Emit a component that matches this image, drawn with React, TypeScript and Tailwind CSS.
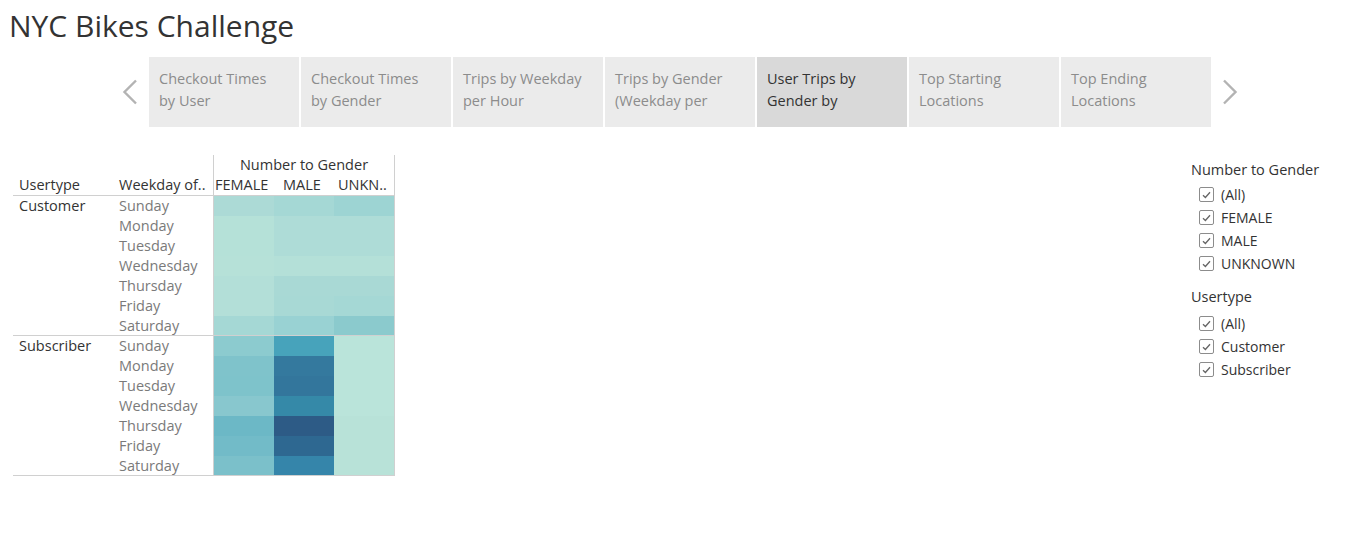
import React from "react";

const tabs = [
  { lines: ["Checkout Times", "by User"] },
  { lines: ["Checkout Times", "by Gender"] },
  { lines: ["Trips by Weekday", "per Hour"] },
  { lines: ["Trips by Gender", "(Weekday per"] },
  { lines: ["User Trips by", "Gender by"], active: true },
  { lines: ["Top Starting", "Locations"] },
  { lines: ["Top Ending", "Locations"] },
];

const days = ["Sunday", "Monday", "Tuesday", "Wednesday", "Thursday", "Friday", "Saturday"];

const groups = [
  {
    name: "Customer",
    cells: [
      ["#acdad6", "#a5d8d5", "#9dd4d3"],
      ["#b5e1d8", "#aedcd7", "#aedcd7"],
      ["#b5e1d8", "#aedcd7", "#aedcd7"],
      ["#b6e1d8", "#b4e0d8", "#b4e0d8"],
      ["#b3dfd8", "#a9d9d5", "#a9d9d5"],
      ["#b3dfd8", "#a8d9d5", "#a5d8d5"],
      ["#a5d8d5", "#99d2d3", "#8bcacd"],
    ],
  },
  {
    name: "Subscriber",
    cells: [
      ["#8ccbcf", "#47a3bb", "#bae4da"],
      ["#7fc3cb", "#34799e", "#bae4da"],
      ["#7ec3cb", "#33769c", "#bae4da"],
      ["#88c7ce", "#3589a8", "#bae4da"],
      ["#6cb8c6", "#2d5b86", "#b8e2d8"],
      ["#72bbc8", "#2e6891", "#b8e2d8"],
      ["#7bc0ca", "#3585aa", "#b8e2d8"],
    ],
  },
];

function Chevron({ dir }: { dir: "left" | "right" }) {
  return (
    <svg width="16" height="26" viewBox="0 0 16 26" fill="none">
      <path
        d={dir === "left" ? "M14 1.5 L2.5 13 L14 24.5" : "M2 1.5 L13.5 13 L2 24.5"}
        stroke="#b3b3b3"
        strokeWidth="2.4"
      />
    </svg>
  );
}

function CheckItem({ label }: { label: string }) {
  return (
    <div className="flex h-[23px] items-center pl-[8px]">
      <span className="flex h-[15px] w-[15px] items-center justify-center rounded-[2px] border border-[#8c8c8c] bg-white">
        <svg width="9" height="8" viewBox="0 0 9 8" fill="none">
          <path d="M1 4.2 L3.4 6.5 L8 1.2" stroke="#666" strokeWidth="1.3" />
        </svg>
      </span>
      <span className="ml-[7px] text-[14px] text-[#333]">{label}</span>
    </div>
  );
}

export default function App() {
  return (
    <div className="h-[539px] w-[1361px] overflow-hidden bg-white font-['Open_Sans',sans-serif] text-[#333]">
      {/* Title */}
      <h1 className="pl-[9px] pt-[7px] text-[30px] leading-[38px] text-[#333]">NYC Bikes Challenge</h1>

      {/* Tabs */}
      <div className="mt-[12px] flex h-[70px] items-center">
        <div className="flex w-[149px] justify-end pr-[11px]">
          <Chevron dir="left" />
        </div>
        <div className="flex gap-[2px]">
          {tabs.map((t) => (
            <div
              key={t.lines[0]}
              className={`h-[70px] w-[150px] px-[10px] pt-[11px] ${t.active ? "bg-[#d9d9d9] text-[#333]" : "bg-[#ebebeb] text-[#8c8c8c]"}`}
            >
              {t.lines.map((l) => (
                <div key={l} className="whitespace-nowrap text-[14.5px] leading-[22px]">
                  {l}
                </div>
              ))}
            </div>
          ))}
        </div>
        <div className="pl-[11px]">
          <Chevron dir="right" />
        </div>
      </div>

      {/* Main */}
      <div className="mt-[28px] flex">
        {/* Table */}
        <div className="ml-[13px] w-[382px] text-[14.5px] leading-[20px]">
          <div className="flex border-b border-[#d0d0d0]">
            <div className="flex w-[200px] items-end">
              <div className="w-[100px] pl-[6px]">Usertype</div>
              <div className="w-[100px] whitespace-nowrap pl-[6px]">Weekday of..</div>
            </div>
            <div className="w-[182px] border-x border-[#d0d0d0]">
              <div className="text-center">Number to Gender</div>
              <div className="flex whitespace-nowrap">
                <div className="w-[60px] pl-[1px]">FEMALE</div>
                <div className="w-[60px] pl-[9px]">MALE</div>
                <div className="w-[60px] pl-[4px]">UNKN..</div>
              </div>
            </div>
          </div>
          {groups.map((g) => (
            <div key={g.name} className="flex h-[140px] overflow-hidden border-b border-[#d0d0d0]">
              <div className="w-[100px] pl-[6px]">{g.name}</div>
              <div className="w-[100px] pl-[6px] text-[#7a7a7a]">
                {days.map((d) => (
                  <div key={d}>{d}</div>
                ))}
              </div>
              <div className="w-[182px] border-x border-[#d0d0d0]">
                {g.cells.map((row, i) => (
                  <div key={i} className="flex h-[20px]">
                    {row.map((c, j) => (
                      <div key={j} className="h-[20px] w-[60px] shrink-0" style={{ backgroundColor: c }} />
                    ))}
                  </div>
                ))}
              </div>
            </div>
          ))}
        </div>

        {/* Filters */}
        <div className="ml-auto mt-[4px] w-[170px]">
          <div className="text-[14.5px] leading-[22px] text-[#333]">Number to Gender</div>
          <div className="mt-[2px]">
            <CheckItem label="(All)" />
            <CheckItem label="FEMALE" />
            <CheckItem label="MALE" />
            <CheckItem label="UNKNOWN" />
          </div>
          <div className="mt-[11px] text-[14.5px] leading-[22px] text-[#333]">Usertype</div>
          <div className="mt-[4px]">
            <CheckItem label="(All)" />
            <CheckItem label="Customer" />
            <CheckItem label="Subscriber" />
          </div>
        </div>
      </div>
    </div>
  );
}
